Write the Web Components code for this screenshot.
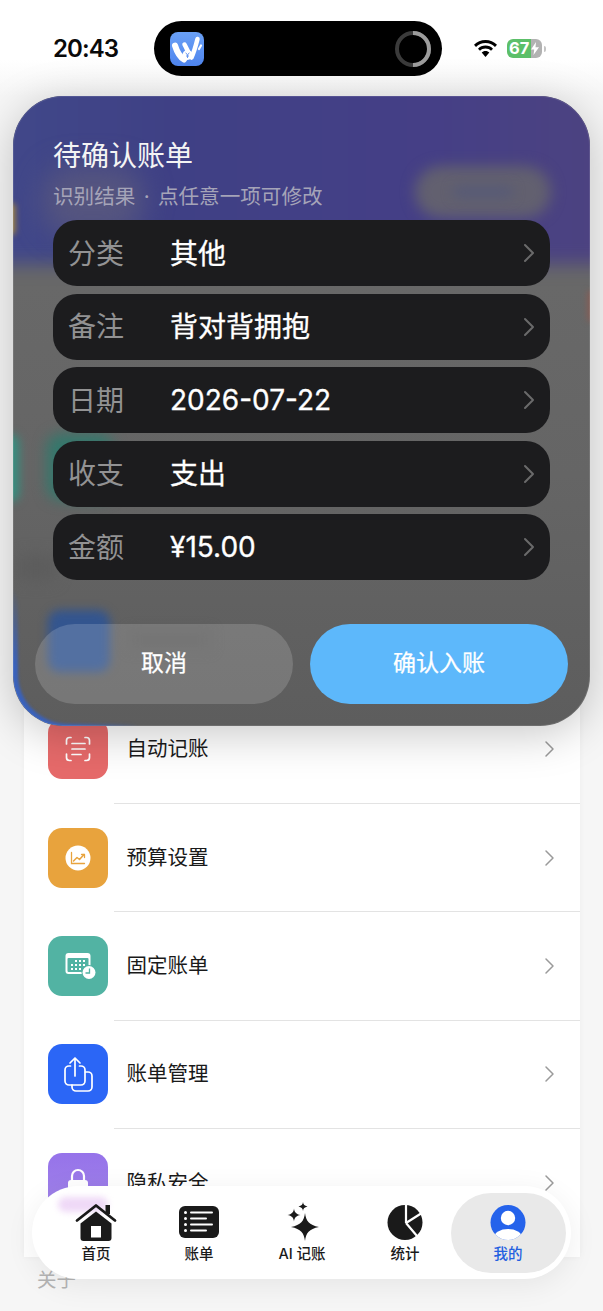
<!DOCTYPE html>
<html lang="zh-CN">
<head>
<meta charset="utf-8">
<title>待确认账单</title>
<style>
  html, body { margin: 0; padding: 0; height: 100%; background: #f6f6f6; }
  body { font-family: Inter, "Noto Sans CJK SC", sans-serif; overflow: hidden; }
</style>
</head>
<body>

<phone-page>
  <status-bar slot="status"></status-bar>

  <settings-row color="#e66a6a" label="自动记账">
    <svg viewBox="0 0 60 60" fill="none" stroke="#fff" stroke-width="1.700" stroke-linecap="round">
      <path d="M23 18.500h-1.500a3 3 0 0 0-3 3v3.500M37 18.500h1.500a3 3 0 0 1 3 3v3.500M18.500 35v3.500a3 3 0 0 0 3 3h1.500M41.500 35v3.500a3 3 0 0 1-3 3h-1.500"/>
      <path d="M24 24.500h13M24 30h13M24 35.500h9"/>
    </svg>
  </settings-row>
  <settings-row color="#e8a33d" label="预算设置">
    <svg viewBox="0 0 60 60" fill="none">
      <circle cx="30" cy="30" r="12.500" fill="#fff"/>
      <path d="M23.500 24.500v11h13" stroke="#e8a33d" stroke-width="1.300" stroke-linecap="round"/>
      <path d="M25.500 33l3.500-3.500 2.500 2 4.500-5" stroke="#e8a33d" stroke-width="1.500" stroke-linecap="round" stroke-linejoin="round"/>
      <path d="M33.500 26.500h3v3" stroke="#e8a33d" stroke-width="1.300" stroke-linecap="round" stroke-linejoin="round"/>
    </svg>
  </settings-row>
  <settings-row color="#52b3a3" label="固定账单">
    <svg viewBox="0 0 60 60">
      <path d="M20.500 17h19a3 3 0 0 1 3 3v15a3 3 0 0 1-3 3h-19a3 3 0 0 1-3-3v-15a3 3 0 0 1 3-3z" fill="#fff"/>
      <rect x="19.500" y="22" width="21" height="14" rx="1" fill="#52b3a3"/>
      <g fill="#fff">
        <rect x="27" y="24" width="2" height="2"/><rect x="31" y="24" width="2" height="2"/><rect x="35" y="24" width="2" height="2"/>
        <rect x="23" y="28" width="2" height="2"/><rect x="27" y="28" width="2" height="2"/><rect x="31" y="28" width="2" height="2"/><rect x="35" y="28" width="2" height="2"/>
        <rect x="23" y="32" width="2" height="2"/><rect x="27" y="32" width="2" height="2"/><rect x="31" y="32" width="2" height="2"/>
      </g>
      <circle cx="41" cy="36.500" r="7.500" fill="#52b3a3"/>
      <circle cx="41" cy="36.500" r="6.500" fill="#fff"/>
      <path d="M41.500 32.500v4.500h-4" fill="none" stroke="#52b3a3" stroke-width="1.300"/>
    </svg>
  </settings-row>
  <settings-row color="#2b66f6" label="账单管理">
    <svg viewBox="0 0 60 60" fill="none" stroke="#fff" stroke-width="1.700" stroke-linecap="round" stroke-linejoin="round">
      <path d="M22.500 22h-1.500a4 4 0 0 0-4 4v11a4 4 0 0 0 4 4h12a4 4 0 0 0 4-4v-11a4 4 0 0 0-4-4h-1.500"/>
      <path d="M27 32V14M22 19l5-5 5 5"/>
      <path d="M37.500 28h2.500a4 4 0 0 1 4 4v11a4 4 0 0 1-4 4h-12a4 4 0 0 1-4-4v-2"/>
    </svg>
  </settings-row>
  <settings-row color="linear-gradient(#9673ea,#a184e8)" label="隐私安全" last>
    <svg viewBox="0 0 60 60">
      <path d="M24 27v-4a6 6 0 0 1 12 0v4" fill="none" stroke="#fff" stroke-width="2.200"/>
      <rect x="20" y="27" width="20" height="17" rx="3" fill="#fff"/>
    </svg>
  </settings-row>

  <section-heading slot="after">关于</section-heading>

  <confirm-sheet slot="overlay" heading="待确认账单" hint="识别结果 · 点任意一项可修改">
    <field-row label="分类" value="其他"></field-row>
    <field-row label="备注" value="背对背拥抱"></field-row>
    <field-row label="日期" value="2026-07-22"></field-row>
    <field-row label="收支" value="支出"></field-row>
    <field-row label="金额" value="¥15.00"></field-row>
  </confirm-sheet>

  <tab-bar slot="overlay">
    <tab-item label="首页">
      <svg viewBox="0 0 42 38" width="42" height="38">
        <path d="M30.500 2h4.500v9h-4.500z" fill="#1a1a1a"/>
        <path d="M2 17.500L21 2.500l19 15" fill="none" stroke="#1a1a1a" stroke-width="2.800" stroke-linecap="round" stroke-linejoin="round"/>
        <path d="M5.500 20.500L21 8.500l15.500 12V35a3 3 0 0 1-3 3H8.500a3 3 0 0 1-3-3z" fill="#1a1a1a"/>
        <rect x="16" y="23" width="10" height="11.500" fill="#fff"/>
      </svg>
    </tab-item>
    <tab-item label="账单">
      <svg viewBox="0 0 42 38" width="42" height="38">
        <rect x="1" y="3" width="40" height="32" rx="6" fill="#1a1a1a"/>
        <g fill="#fff">
          <circle cx="7.500" cy="9.500" r="1.500"/><circle cx="7.500" cy="15.500" r="1.500"/><circle cx="7.500" cy="21.500" r="1.500"/><circle cx="7.500" cy="27.500" r="1.500"/>
          <rect x="12" y="8.500" width="23" height="2" rx="1"/><rect x="12" y="14.500" width="17" height="2" rx="1"/><rect x="12" y="20.500" width="23" height="2" rx="1"/><rect x="12" y="26.500" width="17" height="2" rx="1"/>
        </g>
      </svg>
    </tab-item>
    <tab-item label="AI 记账">
      <svg viewBox="0 0 42 38" width="42" height="38" fill="#1a1a1a">
        <path d="M24 10c1 8 4 12 14 14-10 2-13 6-14 14-1-8-4-12-14-14 10-2 13-6 14-14z"/>
        <path d="M13 5.500c.4 3.800 2.200 5.700 6.500 6.500-4.300.8-6.100 2.700-6.500 6.500-.4-3.800-2.200-5.700-6.500-6.500 4.300-.8 6.100-2.700 6.500-6.500z"/>
        <path d="M22 -1c.3 2.500 1.500 3.800 4.500 4.500-3 .7-4.200 2-4.500 4.500-.3-2.500-1.500-3.800-4.500-4.500 3-.7 4.200-2 4.500-4.500z"/>
      </svg>
    </tab-item>
    <tab-item label="统计">
      <svg viewBox="0 0 42 38" width="42" height="38">
        <circle cx="21" cy="19.500" r="17.500" fill="#1a1a1a"/>
        <path d="M22 20V1M22 20L37 10.500M22 20l11 13" stroke="#fff" stroke-width="2.200" fill="none"/>
      </svg>
    </tab-item>
    <tab-item label="我的" active>
      <svg viewBox="0 0 42 38" width="42" height="38">
        <defs><clipPath id="me"><circle cx="21" cy="19.500" r="17.500"/></clipPath></defs>
        <circle cx="21" cy="19.500" r="17.500" fill="#2563eb"/>
        <g clip-path="url(#me)" fill="#fff">
          <circle cx="21" cy="15" r="7.200"/>
          <ellipse cx="21" cy="34.500" rx="14" ry="8.500"/>
        </g>
      </svg>
    </tab-item>
  </tab-bar>
</phone-page>

<script>
// 整页骨架：状态栏 + 设置列表，弹层和底栏盖在上面
class PhonePage extends HTMLElement {
    constructor() {
        super();
        this.attachShadow({ mode: 'open' });
        this.shadowRoot.innerHTML = `
            <style>
                :host {
                    display: block;
                    position: relative;
                    width: 603px;
                    height: 1311px;
                    overflow: hidden;
                    background: linear-gradient(#fff 0, #fff 60px, #f6f6f6 96px);
                }
                .card {
                    margin: 200px 23px 0 24px;
                    padding: 399px 0 20px;
                    background: #fff;
                    box-shadow: 0 0 6px rgba(0, 0, 0, 0.04);
                }
            </style>
            <slot name="status"></slot>
            <div class="card"><slot></slot></div>
            <slot name="after"></slot>
            <slot name="overlay"></slot>
        `;
    }
}

class StatusBar extends HTMLElement {
    constructor() {
        super();
        this.attachShadow({ mode: 'open' });
        this.shadowRoot.innerHTML = `
            <style>
                :host {
                    display: flex;
                    align-items: flex-start;
                    height: 96px;
                    box-sizing: border-box;
                    padding: 21px 0 0 53px;
                }
                .time {
                    width: 101px;
                    height: 55px;
                    font: 600 24px/56px Inter, sans-serif;
                    letter-spacing: -0.9px;
                    color: #0a0a0a;
                }
                .island {
                    display: flex;
                    align-items: center;
                    justify-content: space-between;
                    box-sizing: border-box;
                    width: 288px;
                    height: 55px;
                    padding: 0 11px 0 16px;
                    border-radius: 28px;
                    background: #000;
                }
                .right {
                    display: flex;
                    align-items: center;
                    height: 55px;
                    margin-left: 32px;
                    gap: 10px;
                }
                .battery {
                    position: relative;
                    display: flex;
                    align-items: center;
                    width: 35px;
                    height: 19px;
                    border-radius: 6px;
                    overflow: hidden;
                    background: linear-gradient(90deg, #5cbf69 0 24px, #b2b2b2 24px);
                    font: 700 16.5px/19px Inter, sans-serif;
                    color: #fff;
                    padding-left: 2px;
                    box-sizing: border-box;
                }
                .battery svg { position: absolute; left: 23px; top: 3px; }
                .cap { width: 2px; height: 6px; margin-left: -8px; border-radius: 0 2px 2px 0; background: #c4c4c4; }
            </style>
            <div class="time">20:43</div>
            <div class="island">
                <svg width="34" height="34" viewBox="0 0 34 34">
                    <defs><linearGradient id="lg" x1="0" y1="0" x2="0" y2="1"><stop offset="0" stop-color="#6aa0f5"/><stop offset="1" stop-color="#4f85ee"/></linearGradient></defs>
                    <rect width="34" height="34" rx="8" fill="url(#lg)"/>
                    <path d="M5 13.500C7 20 10 25 14 27.500" fill="none" stroke="#fff" stroke-width="6" stroke-linecap="round"/>
                    <path d="M14.500 12.500C17 17 19 22 21.500 25.500C24.500 19 26 13 27.500 7" fill="none" stroke="#fff" stroke-width="4.500" stroke-linecap="round" stroke-linejoin="round"/>
                    <circle cx="17.500" cy="23" r="5" fill="#fff"/>
                    <path d="M15.700 20.700l1.800 2.300 1.800-2.300M17.500 23v3M16 24h3" fill="none" stroke="#5b8fee" stroke-width="0.900"/>
                    <path d="M29 17l2-3.500" stroke="#fff" stroke-width="2.200" stroke-linecap="round"/>
                </svg>
                <svg width="36" height="36" viewBox="0 0 36 36" fill="none" stroke-width="4">
                    <circle cx="18" cy="18" r="16" stroke="#3b3b3b"/>
                    <path d="M18 2a16 16 0 0 1 0 32" stroke="#9c9c9c"/>
                </svg>
            </div>
            <div class="right">
                <svg width="23" height="17" viewBox="0 0 23 17" fill="#000">
                    <path d="M11.500 0C7 0 3.100 1.800 0 4.800l2 2.100C4.500 4.400 7.800 3 11.500 3s7 1.400 9.500 3.900l2-2.100C19.900 1.800 16 0 11.500 0z"/>
                    <path d="M11.500 5.500c-3 0-5.600 1.200-7.500 3.200l2 2.100c1.400-1.500 3.300-2.300 5.500-2.300s4.100.8 5.500 2.300l2-2.100c-1.900-2-4.500-3.200-7.500-3.200z"/>
                    <path d="M11.500 11c-1.600 0-2.900.6-3.800 1.600l3.800 4.400 3.800-4.400c-.9-1-2.200-1.600-3.800-1.600z"/>
                </svg>
                <div class="battery">67<svg width="10" height="13" viewBox="0 0 10 13" fill="#fff"><path d="M6 0L1 7.500h3.200L3.500 13 9 5.200H5.500z"/></svg></div>
                <div class="cap"></div>
            </div>
        `;
    }
}

class SettingsRow extends HTMLElement {
    constructor() {
        super();
        this.attachShadow({ mode: 'open' });
    }

    connectedCallback() {
        const color = this.getAttribute('color') || '#999';
        const label = this.getAttribute('label') || '';
        this.shadowRoot.innerHTML = `
            <style>
                :host {
                    display: flex;
                    align-items: center;
                    height: 108.4px;
                    box-sizing: border-box;
                    padding-left: 24px;
                    position: relative;
                }
                :host(:not([last]))::after {
                    content: "";
                    position: absolute;
                    left: 90px;
                    right: 0;
                    bottom: -0.6px;
                    height: 1px;
                    background: #e3e3e3;
                }
                .icon {
                    width: 60px;
                    height: 60px;
                    border-radius: 14px;
                    background: ${color};
                    flex: none;
                }
                ::slotted(svg) { display: block; width: 60px; height: 60px; }
                .label {
                    flex: 1;
                    margin-left: 18.5px;
                    font-size: 20.5px;
                    line-height: 30px;
                    color: #1a1a1a;
                }
                .chev { margin-right: 25px; }
            </style>
            <div class="icon"><slot></slot></div>
            <div class="label">${label}</div>
            <svg class="chev" width="11" height="18" viewBox="0 0 11 18" fill="none" stroke="#9a9a9a" stroke-width="1.500" stroke-linecap="round" stroke-linejoin="round">
                <path d="M2 2l7 7-7 7"/>
            </svg>
        `;
    }
}

class SectionHeading extends HTMLElement {
    constructor() {
        super();
        this.attachShadow({ mode: 'open' });
        this.shadowRoot.innerHTML = `
            <style>
                :host {
                    display: block;
                    margin-top: 8px;
                    padding-left: 37px;
                    font-size: 19.5px;
                    line-height: 30px;
                    color: #b4b4b4;
                }
            </style>
            <slot></slot>
        `;
    }
}

class ConfirmSheet extends HTMLElement {
    constructor() {
        super();
        this.attachShadow({ mode: 'open' });
    }

    connectedCallback() {
        this.shadowRoot.innerHTML = `
            <style>
                :host {
                    position: absolute;
                    left: 13px;
                    top: 96px;
                    width: 577px;
                    height: 630px;
                    border-radius: 50px;
                    box-shadow: 0 8px 45px rgba(0, 0, 0, 0.22);
                }
                .glass {
                    position: absolute;
                    inset: 0;
                    border-radius: 50px;
                    overflow: hidden;
                    background: linear-gradient(#686868 30%, #656565 60%, #5d5d5d 100%);
                }
                .glass div { position: absolute; }
                .purple {
                    left: -30px; right: -30px; top: -30px; height: 198px;
                    background: linear-gradient(90deg, #41498a, #3f4085 30%, #453f86 70%, #4d4380);
                    filter: blur(9px);
                }
                .haze { left: 30px; top: 70px; width: 100px; height: 70px; border-radius: 30px; background: #55557f; filter: blur(14px); }
                .pill { left: 402px; top: 70px; width: 136px; height: 52px; border-radius: 26px; background: #62606f; filter: blur(7px); }
                .pill2 { left: 440px; top: 90px; width: 60px; height: 12px; border-radius: 6px; background: #575a76; filter: blur(6px); }
                .amber { left: -14px; top: 108px; width: 16px; height: 30px; background: #a8893a; filter: blur(3px); }
                .teal1 { left: -12px; top: 338px; width: 18px; height: 68px; border-radius: 9px; background: #358f80; filter: blur(5px); }
                .teal2 { left: 34px; top: 338px; width: 66px; height: 66px; border-radius: 14px; background: #33786c; filter: blur(7px); }
                .red { left: 575px; top: 195px; width: 5px; height: 30px; background: #8f5a50; filter: blur(3px); }
                .dark { left: 5px; top: 460px; width: 36px; height: 24px; background: #5c5c5c; filter: blur(8px); }
                .tile { left: 35px; top: 514px; width: 62px; height: 62px; border-radius: 12px; background: #33558f; filter: blur(5px); }
                .blurtext { left: 116px; top: 534px; width: 82px; height: 20px; background: #5b5b5b; filter: blur(6px); }
                .edge {
                    inset: 0;
                    border-radius: 50px;
                    box-shadow: inset 0 0 0 1px rgba(255, 255, 255, 0.1);
                }
                .blue-edge {
                    inset: 0;
                    border-radius: 50px;
                    box-shadow: inset 5px -2px 3px #3a62bc;
                    -webkit-mask-image: linear-gradient(to top right, #000 0, #000 5%, transparent 11%);
                    mask-image: linear-gradient(to top right, #000 0, #000 5%, transparent 11%);
                }
                .content {
                    position: relative;
                    box-sizing: border-box;
                    height: 100%;
                    display: flex;
                    flex-direction: column;
                    padding: 40px 40px 22px;
                }
                h2 {
                    margin: 0;
                    font-size: 28px;
                    font-weight: 400;
                    line-height: 40px;
                    color: #f4f4f4;
                }
                p {
                    margin: 7px 0 9px;
                    font-size: 20.6px;
                    line-height: 28px;
                    word-spacing: 2.5px;
                    color: #a5a4b8;
                }
                .rows { display: flex; flex-direction: column; gap: 7.5px; }
                .actions {
                    display: grid;
                    grid-template-columns: 258px 258px;
                    gap: 17px;
                    margin: auto -18px 0;
                }
                button {
                    height: 80px;
                    padding: 0 0 2px;
                    border: 0;
                    border-radius: 40px;
                    font: 400 23px/78px Inter, "Noto Sans CJK SC", sans-serif;
                    -webkit-text-stroke: 0.25px #fff;
                    color: #fff;
                }
                .cancel { background: rgba(255, 255, 255, 0.16); }
                .ok { background: #5db8fb; }
            </style>
            <div class="glass">
                <div class="purple"></div>
                <div class="haze"></div>
                <div class="pill"></div>
                <div class="pill2"></div>
                <div class="amber"></div>
                <div class="teal1"></div>
                <div class="teal2"></div>
                <div class="red"></div>
                <div class="dark"></div>
                <div class="tile"></div>
                <div class="blurtext"></div>
                <div class="blue-edge"></div>
                <div class="edge"></div>
            </div>
            <div class="content">
                <h2>${this.getAttribute('heading')}</h2>
                <p>${this.getAttribute('hint')}</p>
                <div class="rows"><slot></slot></div>
                <div class="actions">
                    <button class="cancel">取消</button>
                    <button class="ok">确认入账</button>
                </div>
            </div>
        `;
    }
}

class FieldRow extends HTMLElement {
    constructor() {
        super();
        this.attachShadow({ mode: 'open' });
    }

    connectedCallback() {
        const value = this.getAttribute('value');
        // 中文字形在行盒里偏下，数字不偏
        const isCjk = /[\u4e00-\u9fff]/.test(value);
        this.shadowRoot.innerHTML = `
            <style>
                :host {
                    display: flex;
                    align-items: center;
                    height: 66px;
                    box-sizing: border-box;
                    padding: 0 15px;
                    border-radius: 24px;
                    background: #1c1c1e;
                    font-size: 28px;
                }
                .label { width: 102px; color: #929293; margin-top: -3px; }
                .value { flex: 1; color: #fff; -webkit-text-stroke: 0.3px #fff; }
                .value.cjk { margin-top: -3px; }
            </style>
            <span class="label">${this.getAttribute('label')}</span>
            <span class="value ${isCjk ? 'cjk' : ''}">${value}</span>
            <svg width="13" height="20" viewBox="0 0 13 20" fill="none" stroke="#6a6a6b" stroke-width="2" stroke-linecap="round" stroke-linejoin="round">
                <path d="M3 2l8 8-8 8"/>
            </svg>
        `;
    }
}

class TabBar extends HTMLElement {
    constructor() {
        super();
        this.attachShadow({ mode: 'open' });
        this.shadowRoot.innerHTML = `
            <style>
                :host {
                    position: absolute;
                    left: 32px;
                    top: 1186px;
                    width: 539px;
                    height: 93px;
                    box-sizing: border-box;
                    padding: 7px 12.5px 6px;
                    display: grid;
                    grid-template-columns: repeat(5, 103px);
                    border-radius: 46.5px;
                    background: #fff;
                    box-shadow: 0 6px 30px rgba(0, 0, 0, 0.07);
                }
                .glow {
                    position: absolute;
                    left: 26px;
                    top: 11px;
                    width: 50px;
                    height: 15px;
                    border-radius: 8px;
                    background: #efd9f7;
                    filter: blur(3px);
                }
            </style>
            <div class="glow"></div>
            <slot></slot>
        `;
    }
}

class TabItem extends HTMLElement {
    constructor() {
        super();
        this.attachShadow({ mode: 'open' });
    }

    connectedCallback() {
        this.shadowRoot.innerHTML = `
            <style>
                :host {
                    position: relative;
                    display: flex;
                    flex-direction: column;
                    align-items: center;
                    height: 80px;
                    padding-top: 10px;
                    box-sizing: border-box;
                    font-size: 14.500px;
                    font-weight: 500;
                    color: #1a1a1a;
                }
                :host([active]) { color: #2460e0; }
                :host([active])::before {
                    content: "";
                    position: absolute;
                    left: -6px;
                    right: -6px;
                    top: 0;
                    bottom: 0;
                    border-radius: 40px;
                    background: #e9e9e9;
                }
                ::slotted(svg) { position: relative; display: block; overflow: visible; }
                .text { position: relative; line-height: 20px; margin-top: 3px; white-space: nowrap; }
            </style>
            <slot></slot>
            <span class="text">${this.getAttribute('label')}</span>
        `;
    }
}

customElements.define('phone-page', PhonePage);
customElements.define('status-bar', StatusBar);
customElements.define('settings-row', SettingsRow);
customElements.define('section-heading', SectionHeading);
customElements.define('confirm-sheet', ConfirmSheet);
customElements.define('field-row', FieldRow);
customElements.define('tab-bar', TabBar);
customElements.define('tab-item', TabItem);
</script>
</body>
</html>
